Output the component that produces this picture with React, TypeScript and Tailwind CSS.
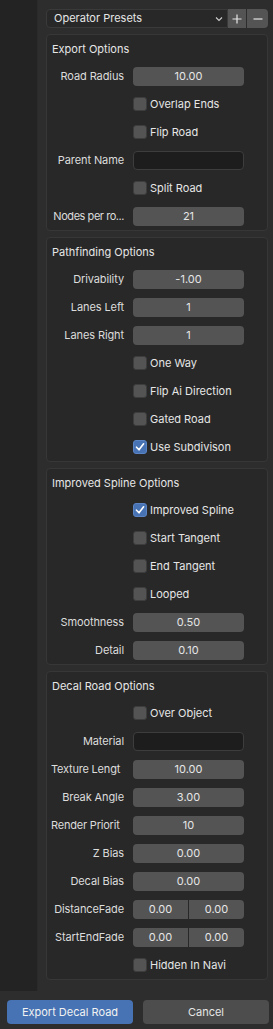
import React from 'react';

type Row =
  | { kind: 'num'; label: string; value: string; clip?: 'left' | 'tight' }
  | { kind: 'text'; label: string }
  | { kind: 'check'; label: string; checked?: boolean }
  | { kind: 'pair'; label: string; a: string; b: string };

const panels: { title: string; rows: Row[] }[] = [
  {
    title: 'Export Options',
    rows: [
      { kind: 'num', label: 'Road Radius', value: '10.00' },
      { kind: 'check', label: 'Overlap Ends' },
      { kind: 'check', label: 'Flip Road' },
      { kind: 'text', label: 'Parent Name' },
      { kind: 'check', label: 'Split Road' },
      { kind: 'num', label: 'Nodes per ro...', value: '21', clip: 'tight' },
    ],
  },
  {
    title: 'Pathfinding Options',
    rows: [
      { kind: 'num', label: 'Drivability', value: '-1.00' },
      { kind: 'num', label: 'Lanes Left', value: '1' },
      { kind: 'num', label: 'Lanes Right', value: '1' },
      { kind: 'check', label: 'One Way' },
      { kind: 'check', label: 'Flip Ai Direction' },
      { kind: 'check', label: 'Gated Road' },
      { kind: 'check', label: 'Use Subdivison', checked: true },
    ],
  },
  {
    title: 'Improved Spline Options',
    rows: [
      { kind: 'check', label: 'Improved Spline', checked: true },
      { kind: 'check', label: 'Start Tangent' },
      { kind: 'check', label: 'End Tangent' },
      { kind: 'check', label: 'Looped' },
      { kind: 'num', label: 'Smoothness', value: '0.50' },
      { kind: 'num', label: 'Detail', value: '0.10' },
    ],
  },
  {
    title: 'Decal Road Options',
    rows: [
      { kind: 'check', label: 'Over Object' },
      { kind: 'text', label: 'Material' },
      { kind: 'num', label: 'Texture Lengt', value: '10.00', clip: 'left' },
      { kind: 'num', label: 'Break Angle', value: '3.00' },
      { kind: 'num', label: 'Render Priorit', value: '10', clip: 'left' },
      { kind: 'num', label: 'Z Bias', value: '0.00' },
      { kind: 'num', label: 'Decal Bias', value: '0.00' },
      { kind: 'pair', label: 'DistanceFade', a: '0.00', b: '0.00' },
      { kind: 'pair', label: 'StartEndFade', a: '0.00', b: '0.00' },
      { kind: 'check', label: 'Hidden In Navi' },
    ],
  },
];

const Checkbox = ({ checked }: { checked?: boolean }) =>
  checked ? (
    <div className="w-[14px] h-[14px] rounded-[3px] bg-[#4772b3] border border-[#5a84c4] flex items-center justify-center">
      <svg width="10" height="10" viewBox="0 0 10 10" fill="none">
        <path d="M1.5 5.2 L4 7.8 L8.6 1.8" stroke="#ffffff" strokeWidth="1.6" strokeLinecap="round" strokeLinejoin="round" />
      </svg>
    </div>
  ) : (
    <div className="w-[14px] h-[14px] rounded-[3px] bg-[#545454] border border-[#3d3d3d]" />
  );

const RowView = ({ row }: { row: Row }) => {
  const clip = row.kind === 'num' ? row.clip : undefined;
  return (
    <div className="h-[28px] flex items-center pl-[4px] gap-[9px]">
      <div
        className={
          clip === 'left'
            ? 'w-[73px] shrink-0 flex justify-start whitespace-nowrap text-[#dcdcdc] tracking-[-0.2px]'
            : clip === 'tight'
              ? 'w-[73px] shrink-0 flex justify-end whitespace-nowrap text-[#dcdcdc] tracking-[-0.45px]'
              : 'w-[73px] shrink-0 flex justify-end whitespace-nowrap text-[#dcdcdc] tracking-[-0.1px]'
        }
      >
        {row.kind === 'check' ? '' : row.label}
      </div>
      {row.kind === 'num' && (
        <div className="w-[111px] h-[19px] rounded-[4px] bg-[#545454] flex items-center justify-center text-[#e6e6e6]">
          {row.value}
        </div>
      )}
      {row.kind === 'text' && (
        <div className="w-[111px] h-[19px] rounded-[4px] bg-[#1d1d1d] border border-[#3d3d3d]" />
      )}
      {row.kind === 'pair' && (
        <div className="w-[111px] h-[19px] flex gap-px">
          <div className="flex-1 rounded-l-[4px] bg-[#545454] flex items-center justify-center text-[#e6e6e6]">{row.a}</div>
          <div className="flex-1 rounded-r-[4px] bg-[#545454] flex items-center justify-center text-[#e6e6e6]">{row.b}</div>
        </div>
      )}
      {row.kind === 'check' && (
        <div className="flex items-center gap-[3px] text-[#e6e6e6] whitespace-nowrap">
          <Checkbox checked={row.checked} />
          <span>{row.label}</span>
        </div>
      )}
    </div>
  );
};

export default function App() {
  return (
    <div
      className="w-[273px] h-[1029px] bg-[#2d2d2d] flex flex-col text-[11px] leading-none overflow-hidden"
      style={{ fontFamily: 'Inter, "Noto Sans", sans-serif' }}
    >
      <div className="h-[991px] flex">
        <div className="w-[38px] bg-[#232323] border-r border-[#2a2a2a]" />
        <div className="flex-1 pl-[8px] pr-[5px] pt-[9px] flex flex-col gap-[6px]">
          <div className="h-[19px] flex">
            <div className="flex-1 rounded-l-[4px] bg-[#282828] border border-[#3a3a3a] flex items-center pl-[7px] pr-[4px] text-[#e6e6e6]">
              <span className="flex-1">Operator Presets</span>
              <svg width="8" height="6" viewBox="0 0 8 6" fill="none">
                <path d="M1 1.5 L4 4.5 L7 1.5" stroke="#cfcfcf" strokeWidth="1.1" />
              </svg>
            </div>
            <div className="w-[18px] bg-[#545454] flex items-center justify-center">
              <svg width="10" height="10" viewBox="0 0 10 10">
                <path d="M5 0.5 V9.5 M0.5 5 H9.5" stroke="#e6e6e6" strokeWidth="1.2" />
              </svg>
            </div>
            <div className="w-[21px] ml-px rounded-r-[4px] bg-[#545454] flex items-center justify-center">
              <svg width="10" height="10" viewBox="0 0 10 10">
                <path d="M0.5 5 H9.5" stroke="#e6e6e6" strokeWidth="1.2" />
              </svg>
            </div>
          </div>
          {panels.map((p) => (
            <div key={p.title} className="rounded-[4px] bg-[#282828] border border-[#373737]">
              <div className="h-[27px] flex items-center pl-[5px] pt-[2px] text-[#e6e6e6]">{p.title}</div>
              {p.rows.map((r) => (
                <RowView key={r.label} row={r} />
              ))}
            </div>
          ))}
        </div>
      </div>
      <div className="pt-[9px] pl-[7px] flex gap-[10px]">
        <div className="w-[126px] h-[24px] rounded-[4px] bg-[#4772b3] flex items-center justify-center text-[#f2f2f2]">
          Export Decal Road
        </div>
        <div className="w-[126px] h-[24px] rounded-[4px] bg-[#4d4d4d] flex items-center justify-center text-[#e6e6e6]">
          Cancel
        </div>
      </div>
    </div>
  );
}
